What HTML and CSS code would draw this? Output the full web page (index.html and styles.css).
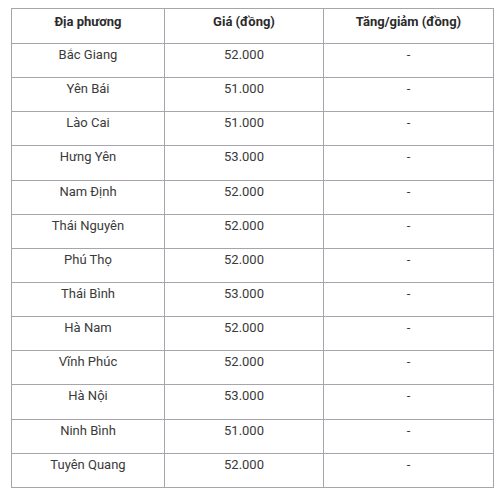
FILE: index.html
```html
<!DOCTYPE html>
<html lang="vi">
<head>
<meta charset="utf-8">
<link rel="stylesheet" href="styles.css">
</head>
<body>
<table class="price-table">
  <colgroup>
    <col class="c1">
    <col class="c2">
    <col class="c3">
  </colgroup>
  <thead>
    <tr class="head-row">
      <th>Địa phương</th>
      <th>Giá (đồng)</th>
      <th>Tăng/giảm (đồng)</th>
    </tr>
  </thead>
  <tbody>
    <tr><td>Bắc Giang</td><td>52.000</td><td>-</td></tr>
    <tr><td>Yên Bái</td><td>51.000</td><td>-</td></tr>
    <tr><td>Lào Cai</td><td>51.000</td><td>-</td></tr>
    <tr><td>Hưng Yên</td><td>53.000</td><td>-</td></tr>
    <tr><td>Nam Định</td><td>52.000</td><td>-</td></tr>
    <tr><td>Thái Nguyên</td><td>52.000</td><td>-</td></tr>
    <tr><td>Phú Thọ</td><td>52.000</td><td>-</td></tr>
    <tr><td>Thái Bình</td><td>53.000</td><td>-</td></tr>
    <tr><td>Hà Nam</td><td>52.000</td><td>-</td></tr>
    <tr><td>Vĩnh Phúc</td><td>52.000</td><td>-</td></tr>
    <tr><td>Hà Nội</td><td>53.000</td><td>-</td></tr>
    <tr><td>Ninh Bình</td><td>51.000</td><td>-</td></tr>
    <tr><td>Tuyên Quang</td><td>52.000</td><td>-</td></tr>
  </tbody>
</table>
</body>
</html>
```
FILE: styles.css
```css
html, body {
  margin: 0;
  padding: 0;
  background: #ffffff;
}
body {
  font-family: Roboto, "Liberation Sans", Arial, sans-serif;
  font-size: 13px;
  color: #3a3a3a;
}
.price-table {
  margin: 8px 0 0 11px;
  width: 482px;
  table-layout: fixed;
  border-collapse: collapse;
  border: 1px solid #a8a4ae;
}
.c1 { width: 153px; }
.c2 { width: 159px; }
.c3 { width: 170px; }
.price-table th,
.price-table td {
  border: 1px solid #a8a4ae;
  text-align: center;
  vertical-align: top;
  padding: 1px 4px 0;
  line-height: 20px;
  box-sizing: border-box;
}
.price-table th {
  font-weight: bold;
  color: #2b2b2b;
  padding-top: 3px;
}
.head-row { height: 35px; }
.price-table tbody tr { height: 34.15px; }
```
